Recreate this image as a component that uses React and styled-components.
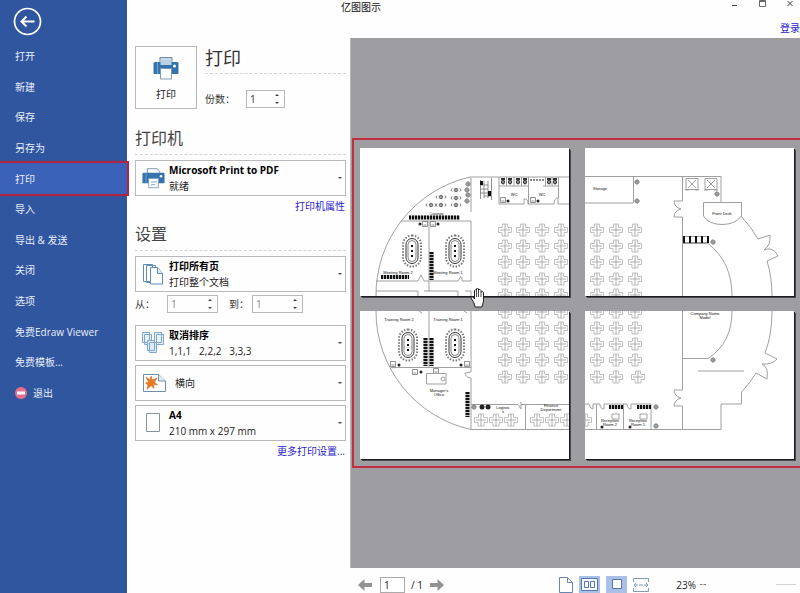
import React, { useState } from "react";
import styled, { createGlobalStyle, css } from "styled-components";

const GlobalStyle = createGlobalStyle`
  * { box-sizing: border-box; }
  body {
    margin: 0;
    background: #fefefe;
    color: #222;
    font: 10px/16px "Open Sans", "Noto Sans CJK SC", sans-serif;
  }
  button, input { font: inherit; color: inherit; }
  button { cursor: pointer; }
`;

/* ---------- shell ---------- */

const Shell = styled.div`
  display: grid;
  grid-template-columns: 127px 223px minmax(0, 1fr);
  grid-template-rows: 38px minmax(0, 1fr);
  min-height: 100vh;
`;

const Sidebar = styled.aside`
  grid-row: 1 / 3;
  background: #30569f;
  color: #e9eefa;
`;

const BackButton = styled.button`
  display: block;
  margin: 7px 0 5px 13px;
  padding: 0;
  width: 29px;
  height: 29px;
  border: 0;
  background: none;
  svg { display: block; }
`;

const Menu = styled.nav`
  display: grid;
  grid-auto-rows: 1fr;
  height: 367px;
`;

const MenuItem = styled.a`
  display: flex;
  align-items: center;
  gap: 6px;
  padding-left: 15px;
  color: inherit;
  text-decoration: none;
  white-space: nowrap;
  ${(p) =>
    p.$active &&
    css`
      background: #3a62b9;
      box-shadow: 0 0 0 2px #b5233f;
      z-index: 1;
    `}
`;

const TitleBar = styled.header`
  grid-column: 2 / 4;
  display: grid;
  grid-template-columns: 1fr auto;
  grid-template-rows: 14px 24px;
`;

const AppTitle = styled.div`
  padding-left: 214px;
  line-height: 14px;
  color: #111;
`;

const WindowButtons = styled.div`
  display: flex;
  gap: 16px;
  padding-right: 4px;
`;

const WindowButton = styled.button`
  width: 12px;
  height: 12px;
  padding: 0;
  border: 0;
  background: none;
  svg { display: block; }
`;

const TextLink = styled.a`
  color: #2a22cc;
  text-decoration: none;
`;

const LoginLink = styled(TextLink)`
  grid-column: 2;
  justify-self: end;
  line-height: 29px;
`;

/* ---------- print settings ---------- */

const Settings = styled.main`
  padding: 8px 4px 0 8px;
`;

const PrintRow = styled.section`
  display: grid;
  grid-template-columns: 62px 1fr;
  gap: 8px;
`;

const PrintButton = styled.button`
  display: flex;
  flex-direction: column;
  align-items: center;
  gap: 6px;
  height: 63px;
  padding: 9px 0 0;
  border: 1px solid #b9b9bd;
  background: #fefefe;
`;

const PrintTitle = styled.h1`
  margin: 0 0 16px;
  height: 28px;
  border-bottom: 1px dashed #d2d2d2;
  font-size: 18px;
  line-height: 25px;
  font-weight: 400;
  color: #333;
`;

const SectionTitle = styled.h2`
  margin: ${(p) => p.$top}px 0 5px;
  height: 26px;
  border-bottom: 1px dashed #d2d2d2;
  font-size: 16px;
  line-height: 19px;
  font-weight: 400;
  color: #444;
`;

const Field = styled.div`
  display: flex;
  align-items: center;
  color: ${(p) => (p.$dim ? "#888" : "#333")};
`;

const FieldLabel = styled.label`
  width: ${(p) => p.$w}px;
  color: #333;
`;

const Stepper = styled.div`
  display: flex;
  width: ${(p) => p.$w}px;
  height: 18px;
  border: 1px solid #b9b9bd;
`;

const StepInput = styled.input`
  flex: 1;
  min-width: 0;
  padding: 0 0 0 3px;
  border: 0;
  outline: 0;
  background: none;
`;

const StepButtons = styled.div`
  display: grid;
  width: 14px;
`;

const StepButton = styled.button`
  display: grid;
  place-items: center;
  padding: 0;
  border: 0;
  background: none;
`;

const RangeRow = styled.div`
  display: flex;
  gap: 11px;
  margin: 3px 0 12px;
`;

const Choices = styled.div`
  display: grid;
  gap: 4px;
`;

const Choice = styled.button`
  display: flex;
  align-items: center;
  width: 100%;
  height: 36px;
  padding: 0 3px 0 6px;
  border: 1px solid #b9b9bd;
  background: #fefefe;
  text-align: left;
  color: #222;
`;

const ChoiceIcon = styled.span`
  display: grid;
  flex: none;
  width: ${(p) => (p.$wide ? 33 : 27)}px;
`;

const ChoiceText = styled.span`
  flex: 1;
  white-space: pre;
  strong, span { display: block; }
  strong { color: #000; }
`;

const LinkLine = styled.div`
  line-height: 20px;
  text-align: right;
  padding-right: 1px;
`;

/* ---------- preview ---------- */

const Preview = styled.section`
  display: grid;
  grid-template-rows: minmax(0, 1fr) 25px;
  min-width: 0;
`;

const Canvas = styled.div`
  display: flex;
  align-items: center;
  background: #9e9da2;
  padding-left: 1px;
  border-left: 1px solid #b5b4b8;
`;

const Sheets = styled.div`
  position: relative;
  flex: 1;
  display: grid;
  grid-template-columns: 1fr 1fr;
  gap: 15px 16px;
  padding: 8px 6px 7px 6px;
  border: 2px solid #c32f3c;
  border-right: 0;
`;

const Sheet = styled.svg`
  display: block;
  width: 100%;
  background: #fff;
  box-shadow: 1px 1px 0 #1c1c20, 2px 2px 0 #4a4a50;
`;

const HandCursor = styled.svg`
  position: absolute;
  left: 26%;
  top: 45%;
  width: 16px;
  height: 21px;
`;

const StatusBar = styled.footer`
  display: flex;
  align-items: center;
  padding: 8px 4px 0 8px;
  color: #222;
  svg { display: block; }
`;

const IconButton = styled.button`
  display: grid;
  place-items: center;
  padding: 0;
  border: 0;
  width: ${(p) => p.$w || 14}px;
  height: 17px;
  background: ${(p) => (p.$on ? "#a9c1e6" : "none")};
`;

const PageInput = styled.input`
  width: 25px;
  height: 16px;
  margin: 0 6px 0 8px;
  padding: 0 3px;
  border: 1px solid #aaa;
  background: #fff;
`;

const PageTotal = styled.span`
  width: 19px;
`;

const ViewButtons = styled.div`
  display: flex;
  gap: 6px;
  margin-left: auto;
`;

const ZoomValue = styled.output`
  margin: 0 4px 0 26px;
`;

const ZoomSlider = styled.input`
  appearance: none;
  width: 20px;
  height: 1px;
  margin: 0 0 0 70px;
  background: #d2d2d2;
  &::-webkit-slider-thumb { appearance: none; width: 1px; height: 1px; }
`;

/* ---------- icons ---------- */

const Printer = ({ w, h, lined }) => (
  <svg width={w} height={h} viewBox="0 0 26 24" fill="none">
    <path d={lined ? "M6 8V1.5h11l3 3V8" : "M7 10V1.5h12V10z"} fill={lined ? "#fff" : "#c5d9ea"} stroke="#6d8ba7" />
    <path d="M2 6h22q1.500 0 1.500 1.500V17q0 1-1 1H1.500q-1 0-1-1V7.500Q.500 6 2 6z" fill="#3474ad" />
    {!lined && <path d="M7.500 4h11v5h-11z" fill="#b9d0e5" />}
    <path d="M4.500 6v12" stroke="#78a5cd" />
    <path d="M7.500 12.500h11v10.500h-11z" fill="#fff" stroke="#829bb2" />
    {lined && <path d="M10 16.500h7M10 19.500h5" stroke="#7ba1c4" />}
    <circle cx="21.500" cy="10" r="1.500" fill="#fff" />
  </svg>
);

const PagesIcon = () => (
  <svg width="22" height="22" viewBox="0 0 22 22" fill="#fff" stroke="#5c8cb9">
    <path d="M1.500 1.500h9v17h-9zM4.500 2.500h9v17h-9z" />
    <path d="M8.500 4.500h7l5 6v10.500h-12z" />
    <path d="M15.500 4.500v6h5" fill="#dbe8f5" />
  </svg>
);

const CollateIcon = () => (
  <svg width="22" height="22" viewBox="0 0 22 22" fill="#e8f1fa" stroke="#7ea6cc">
    <path d="M.500.500h7v10h-7zM2.500 2.500h7v10h-7zM12.500.500h7v10h-7zM14.500 2.500h7v10h-7z" />
    <path d="M5.500 8.500h7v10h-7zM7.500 10.500h7v10h-7z" fill="#dcebf8" />
  </svg>
);

const LandscapeIcon = () => (
  <svg width="25" height="20" viewBox="0 0 25 20">
    <path d="M1.500 1.500h15l7 6.500v10.500h-22z" fill="#fff" stroke="#6f8fae" />
    <path d="M16.500 1.500V8h7" fill="#e2ecf6" stroke="#6f8fae" />
    <path d="M4 4l4 3 1-4 1.500 4L15 5l-2.500 4 3 3-4-.500.500 4-3-3-4 4 1-4.500L3.500 10l3-1z" fill="#e77a24" stroke="#d76a1c" strokeWidth=".6" />
  </svg>
);

const SheetIcon = () => (
  <svg width="22" height="22" viewBox="0 0 22 22">
    <path d="M4.500 1.500h13v18h-13z" fill="#fff" stroke="#8794a2" />
  </svg>
);

const StepCaret = ({ up }) => (
  <svg width="4" height="2" viewBox="0 0 4 2" aria-hidden="true">
    <path d={up ? "M0 2L2 0 4 2z" : "M0 0h4L2 2z"} fill="#444" />
  </svg>
);

const Arrow = ({ right }) => (
  <svg width="14" height="12" viewBox="0 0 14 12">
    <path d={right ? "M14 6L7.500 0v4H0v4h7.500v4z" : "M0 6L6.500 0v4H14v4H6.500v4z"} fill="#929292" />
  </svg>
);

/* ---------- floor plan parts ---------- */

const each = (items, render) => items.map((item, i) => <React.Fragment key={i}>{render(item)}</React.Fragment>);

const Wall = ({ d, w = 1 }) => <path d={d} fill="none" stroke="#a0a0a0" strokeWidth={w} />;

const Label = ({ x, y, children }) => (
  <text x={x} y={y} fontSize="4" fill="#111" textAnchor="middle" fontFamily="Liberation Sans, sans-serif">
    {children}
  </text>
);

const Cluster = ({ x, y }) => (
  <g transform={`translate(${x} ${y})`} fill="none" stroke="#b0b0b0" strokeWidth=".8">
    <path d="M-2.500-3V-6H2.500V-3H3V-2.500H6.500V2.500H3V6H-3V2.500H-6.500V-2.500H-3V-3z" />
    <path d="M0-6V6M-5 0H5" stroke="#999" />
  </g>
);

const Clusters = ({ xs, ys }) => each(xs.flatMap((x) => ys.map((y) => [x, y])), ([x, y]) => <Cluster x={x} y={y} />);

const OvalTable = ({ x, y }) => (
  <g transform={`translate(${x} ${y})`} fill="none">
    <rect x="-9" y="-15.500" width="18" height="31" rx="9" stroke="#777" strokeWidth="2" strokeDasharray="1.500 1.500" />
    <rect x="-6" y="-12.500" width="12" height="25" rx="6" stroke="#333" strokeWidth="1" />
    <rect x="-4" y="-10.500" width="8" height="21" rx="4" stroke="#666" strokeWidth=".8" />
    <path d="M-1-6h2v2h-2zM-1-1h2v2h-2zM-1 4h2v2h-2z" fill="#111" />
  </g>
);

const Shelf = ({ d, w = 4 }) => (
  <g fill="none">
    <path d={d} stroke="#bbb" strokeWidth={w} />
    <path d={d} stroke="#111" strokeWidth={w} strokeDasharray="2 1" />
  </g>
);

const Plant = ({ x, y }) => (
  <g transform={`translate(${x} ${y})`} stroke="#666" fill="none" strokeWidth=".8">
    <circle r="2" />
    <path d="M-2.500 0h5M0-2.500v5" />
  </g>
);

const Seat = ({ x, y }) => (
  <g transform={`translate(${x} ${y})`} stroke="#555" fill="none" strokeWidth=".8">
    <circle r="1.800" fill="#999" />
    <path d="M-4-1.500q-2 1.500 0 3M4-1.500q2 1.500 0 3" />
  </g>
);

const Unit = ({ x, y }) => (
  <g transform={`translate(${x} ${y})`} stroke="#777" fill="none" strokeWidth=".8">
    <path d="M-2.500-2.500h5v5h-5zM-1.500 1h3" />
  </g>
);

const Dot = ({ x, y, r = 1.5 }) => <circle cx={x} cy={y} r={r} fill="#222" />;

const Elevator = ({ x, y }) => (
  <path transform={`translate(${x} ${y})`} d="M-6-5.500H6V5.500H-6zM-4-4L4 4M4-4L-4 4M-7 6h4M3 6h4" fill="none" stroke="#888" strokeWidth=".8" />
);

const NorthWest = () => (
  <Sheet viewBox="360 148 209 148" role="img" aria-label="1">
    <Wall d="M376 297A121 121 0 0 1 470 177H569" />
    <Wall d="M471 178V212M401 221H471V281H462V277M429 221V281H424L421 275L418 281H376M430 281H458L461 276M376 291H418V296M424 291H458V296M465 291H471V296M429 291V281" />
    <Wall d="M499 177V204H524V199Q528 198 528 204H554Q554 198 558 198V204H569M528.500 177V204M558.500 177V198M499 186H528M543 186H558" />
    <Clusters xs={[505, 523, 542, 561]} ys={[230, 246, 262, 279, 295]} />
    {each([[456, 190], [441, 197], [456, 198], [431, 205], [441, 205], [456, 205]], ([x, y]) => <Seat x={x} y={y} />)}
    {each([[468, 184], [467, 190], [468, 195], [467, 201]], ([x, y]) => <Plant x={x} y={y} />)}
    <Label x={437} y={215}>Lounge</Label>
    <Shelf d="M409 217.500H460" />
    <Unit x={425} y={224} /><Unit x={433} y={224} /><Dot x={420} y={224} /><Dot x={438} y={224} />
    <OvalTable x={412} y={251} /><OvalTable x={455} y={251} />
    <Shelf d="M431.500 252V280" />
    <Label x={398} y={274}>Meeting Room 2</Label>
    <Label x={448} y={274}>Meeting Room 1</Label>
    <Shelf d="M381 277H409" />
    <path d="M480.500 180V199M491.500 178V200M484 181V198M488 181V198M480 185h8M480 189h8M480 193h8M484 196h7" stroke="#777" strokeWidth=".8" />
    <path d="M480 181h3v4h-3zM488 191h3v5h-3z" fill="#111" />
    {each([503, 510, 518, 525, 549, 555], (x) => (
      <g>
        <path d={`M${x - 2} 178h4v2h-4z`} fill="#333" />
        <ellipse cx={x} cy="182" rx="1.500" ry="2" fill="#999" stroke="#222" />
      </g>
    ))}
    <Wall d="M506.500 177V186M514 177V186M521.500 177V186M545.500 177V186M552 177V186" />
    <path d="M530 180H544" stroke="#888" strokeWidth="2" strokeDasharray="2 1" />
    <Label x={514} y={196}>WC</Label><Label x={542} y={196}>WC</Label>
    <Unit x={503} y={200} /><Dot x={508} y={201} /><Unit x={533} y={200} /><Dot x={538} y={201} />
  </Sheet>
);

const NorthEast = () => (
  <Sheet viewBox="585 148 209 148" role="img" aria-label="2">
    <Wall d="M585 176.500H721V202M633.500 177V203H585M682.500 177V201H674Q674 207 681 209Q674 211 674 217H682.500V296" />
    <Clusters xs={[597, 616, 635]} ys={[230, 246, 262, 279, 295]} />
    <Label x={600} y={190}>Storage</Label>
    <Plant x={637} y={182} /><Plant x={637} y={201} /><Plant x={717} y={194} /><Plant x={713} y={242} />
    <Elevator x={692} y={184} /><Elevator x={711} y={184} />
    <Wall d="M703.500 202.500H741.500V216Q735 224.500 722 224.500T703.500 216z" />
    <Label x={722} y={215}>Front Desk</Label>
    <Wall d="M741 216Q752 228 758 239L770 235Q771 245 764 250Q773 246 778 256L767 261Q772 277 772 296" />
    <path d="M683 239.500H709" stroke="#999" strokeWidth="7" />
    <path d="M684 239.500H708" stroke="#fff" strokeWidth="5" />
    <path d="M684 236V243M690 236V243M696 236V243M702 236V243M708 236V243" stroke="#111" strokeWidth="2" />
    <Wall d="M683 243.500H708Q732 262 732 296" />
  </Sheet>
);

const SouthWest = () => (
  <Sheet viewBox="360 311 209 148" role="img" aria-label="3">
    <Wall d="M376 311A121 121 0 0 0 471 429.500H569" />
    <Wall d="M429 311V367M391 367.500H471V311M471 367V372L465 373Q466 378 471 378V429M471 404.500H518L521 409V402M521 404.500H569M525.500 404V429M419 311L422 313M464 311L467 313" />
    <Clusters xs={[505, 523, 542, 561]} ys={[312, 328, 344, 360, 377]} />
    <Clusters xs={[481, 496, 511, 537, 552, 567]} ys={[420]} />
    <Label x={399} y={321}>Training Room 2</Label>
    <Label x={448} y={321}>Training Room 1</Label>
    <OvalTable x={408} y={345} /><OvalTable x={455} y={345} />
    <Shelf d="M425.500 338V366" /><Shelf d="M431.500 338V366" /><Shelf d="M467.500 392V417" />
    <Unit x={393} y={364} /><Dot x={399} y={365} /><Dot x={461} y={365} /><Unit x={467} y={364} />
    <Unit x={415} y={372} /><Dot x={421} y={372} /><Unit x={436} y={371} />
    <Wall d="M426.500 373.500H446V384H426.500zM441 379a2 2 0 1 0 4 0a2 2 0 1 0-4 0" />
    <Label x={439} y={392}>Manager's</Label><Label x={439} y={396}>Office</Label>
    <Plant x={474} y={407} /><Dot x={482} y={407} r={2.500} /><Dot x={488} y={407} r={2.500} />
    <Label x={503} y={409}>Logistic</Label><Label x={503} y={413}>s</Label>
    <Label x={551} y={407}>Finance</Label><Label x={551} y={411}>Department</Label>
  </Sheet>
);

const SouthEast = () => (
  <Sheet viewBox="585 311 209 148" role="img" aria-label="4">
    <Wall d="M585 429.500H721V404H741.500V392Q751 382 756 373L767 379Q769 367 762 364Q772 365 777 359L765 353Q772 335 772 311" />
    <Wall d="M682.500 311V390H674Q674 396 681 398Q674 400 674 406H682.500V429M683 358.500H708Q732 343 732 311M698 371H744" />
    <Clusters xs={[597, 616, 635]} ys={[312, 328, 344, 360]} />
    <Clusters xs={[597, 616, 638]} ys={[377]} />
    <Cluster x={585} y={420} />
    <Label x={705} y={315}>Company Name</Label><Label x={705} y={319}>Model</Label>
    <Plant x={713} y={360} /><Plant x={656} y={407} /><Plant x={656} y={426} />
    <Wall d="M585 404H589Q590 409 593 409V404H600Q600 409 604 409V404H627Q627 409 631 409V404H651V429M596.500 404V429M623.500 404V429" />
    <Shelf d="M609 407H623" /><Shelf d="M637 407H651" />
    <Wall d="M612 414H619V419H612zM640 414H647V419H640z" />
    <Label x={610} y={422}>Reception</Label><Label x={610} y={426}>Room 2</Label>
    <Label x={638} y={422}>Reception</Label><Label x={638} y={426}>Room 1</Label>
    <Dot x={602} y={427} /><Dot x={630} y={427} />
  </Sheet>
);

/* ---------- composed controls ---------- */

function NumberField({ id, label, labelWidth, width, dim }) {
  const [value, setValue] = useState(1);
  return (
    <Field $dim={dim}>
      <FieldLabel htmlFor={id} $w={labelWidth}>{label}</FieldLabel>
      <Stepper $w={width}>
        <StepInput id={id} inputMode="numeric" value={value} onChange={(e) => setValue(Number(e.target.value) || 1)} />
        <StepButtons>
          <StepButton aria-label="+" onClick={() => setValue(value + 1)}><StepCaret up /></StepButton>
          <StepButton aria-label="-" onClick={() => setValue(Math.max(1, value - 1))}><StepCaret /></StepButton>
        </StepButtons>
      </Stepper>
    </Field>
  );
}

const Option = ({ icon, title, detail, wide }) => (
  <Choice aria-haspopup="listbox">
    <ChoiceIcon $wide={wide}>{icon}</ChoiceIcon>
    <ChoiceText>
      {title && <strong>{title}</strong>}
      <span>{detail}</span>
    </ChoiceText>
    <StepCaret />
  </Choice>
);

const menu = ["打开", "新建", "保存", "另存为", "打印", "导入", "导出 & 发送", "关闭", "选项", "免费Edraw Viewer", "免费模板..."];

export default function App() {
  return (
    <>
      <GlobalStyle />
      <Shell>
        <Sidebar>
          <BackButton aria-label="返回">
            <svg width="29" height="29" viewBox="0 0 29 29" fill="none" stroke="#fff">
              <circle cx="14.500" cy="14.500" r="13" strokeWidth="1.700" />
              <path d="M21.500 14.500H9M13.500 9.500L8.500 14.500L13.500 19.500" strokeWidth="2" />
            </svg>
          </BackButton>
          <Menu>
            {menu.map((name) => (
              <MenuItem key={name} href="#" $active={name === "打印"}>{name}</MenuItem>
            ))}
            <MenuItem href="#">
              <svg width="12" height="12" viewBox="0 0 12 12">
                <circle cx="6" cy="6" r="6" fill="#e5708d" />
                <path d="M2 4.500h8v3H2z" fill="#fff" />
              </svg>
              退出
            </MenuItem>
          </Menu>
        </Sidebar>

        <TitleBar>
          <AppTitle>亿图图示</AppTitle>
          <WindowButtons>
            <WindowButton aria-label="最小化">
              <svg width="12" height="12"><path d="M4 5.500h5" stroke="#444" /></svg>
            </WindowButton>
            <WindowButton aria-label="最大化">
              <svg width="12" height="12"><path d="M3.500.500h6v6h-6zM3 1.500h7" fill="none" stroke="#666" /></svg>
            </WindowButton>
            <WindowButton aria-label="关闭窗口">
              <svg width="12" height="12"><path d="M3.500 1l5 5M8.500 1l-5 5" stroke="#444" /></svg>
            </WindowButton>
          </WindowButtons>
          <LoginLink href="#">登录</LoginLink>
        </TitleBar>

        <Settings>
          <PrintRow>
            <PrintButton>
              <Printer w={26} h={24} />
              打印
            </PrintButton>
            <div>
              <PrintTitle>打印</PrintTitle>
              <NumberField id="copies" label="份数：" labelWidth={41} width={39} />
            </div>
          </PrintRow>

          <SectionTitle $top={20}>打印机</SectionTitle>
          <Option icon={<Printer w={23} h={24} lined />} title="Microsoft Print to PDF" detail="就绪" />
          <LinkLine><TextLink href="#">打印机属性</TextLink></LinkLine>

          <SectionTitle $top={9}>设置</SectionTitle>
          <Option icon={<PagesIcon />} title="打印所有页" detail="打印整个文档" />
          <RangeRow>
            <NumberField id="from" label="从：" labelWidth={32} width={51} dim />
            <NumberField id="to" label="到：" labelWidth={23} width={51} dim />
          </RangeRow>
          <Choices>
            <Option icon={<CollateIcon />} title="取消排序" detail="1,1,1   2,2,2   3,3,3" />
            <Option icon={<LandscapeIcon />} detail="横向" wide />
            <Option icon={<SheetIcon />} title="A4" detail="210 mm x 297 mm" />
          </Choices>
          <LinkLine><TextLink href="#">更多打印设置...</TextLink></LinkLine>
        </Settings>

        <Preview>
          <Canvas>
            <Sheets>
              <NorthWest />
              <NorthEast />
              <SouthWest />
              <SouthEast />
              <HandCursor viewBox="0 0 16 21">
                <path
                  d="M5 20L4 16L1 11Q1 9 3 10L4.500 12V3.500Q5.500 2 6.500 3.500V2Q7.500 0 8.500 2V3Q10 1.500 11 3.500V5Q12.500 4 13.500 5.500V14L12 20z"
                  fill="#fff"
                  stroke="#222"
                />
                <path d="M6.500 3.500V10M8.500 3V10M11 5V10" stroke="#222" strokeWidth=".8" />
              </HandCursor>
            </Sheets>
          </Canvas>
          <StatusBar>
            <IconButton aria-label="上一页"><Arrow /></IconButton>
            <PageInput aria-label="页码" defaultValue="1" />
            <PageTotal>/ 1</PageTotal>
            <IconButton aria-label="下一页"><Arrow right /></IconButton>
            <ViewButtons>
              <IconButton aria-label="单页">
                <svg width="14" height="16" fill="#fff" stroke="#6487b0"><path d="M.500.500h8l5 5v10H.500zM8.500.500v5h5" /></svg>
              </IconButton>
              <IconButton aria-label="双页" $w={21} $on>
                <svg width="17" height="13" fill="#f5f9ff" stroke="#5378a9"><path d="M.500.500h16v12H.500zM3.500 3.500h4v6h-4zM9.500 3.500h4v6h-4z" /></svg>
              </IconButton>
              <IconButton aria-label="整页" $w={21} $on>
                <svg width="17" height="13" fill="#8fadd8" stroke="#5378a9"><path d="M4.500 1.500h9v9h-9z" fill="#fff" /></svg>
              </IconButton>
              <IconButton aria-label="适合宽度" $w={17}>
                <svg width="17" height="14" fill="none" stroke="#829cbd"><path d="M.500 4V.500h15V4M.500 10v3.500h15V10M1 7h4M11 7h4M3 5L1 7l2 2M13 5l2 2-2 2M6 7h4" /></svg>
              </IconButton>
            </ViewButtons>
            <ZoomValue>23%</ZoomValue>
            <IconButton aria-label="缩小" $w={6}>
              <svg width="6" height="1"><path d="M0 .500h2.500M3.500.500H6" stroke="#777" /></svg>
            </IconButton>
            <ZoomSlider type="range" aria-label="缩放" defaultValue="23" />
          </StatusBar>
        </Preview>
      </Shell>
    </>
  );
}
